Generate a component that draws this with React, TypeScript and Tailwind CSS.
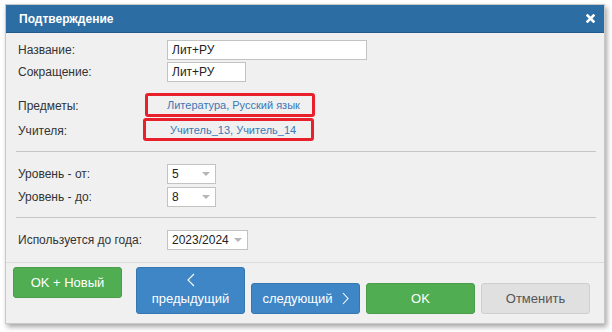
import React from 'react';

const font = { fontFamily: '"Liberation Sans", Arial, sans-serif' };

function Caret() {
  return <span className="ml-auto mr-[5px] h-0 w-0 border-x-[4px] border-t-[4px] border-x-transparent border-t-[#b5b5b5]" />;
}

function Select({ value, width }: { value: string; width: string }) {
  return (
    <div className={`flex h-[20px] ${width} items-center border border-[#c3c3c3] bg-white pl-[4px] text-[12px] text-[#222]`}>
      <span>{value}</span>
      <Caret />
    </div>
  );
}

function Row({ label, children, className = '' }: { label: string; children: React.ReactNode; className?: string }) {
  return (
    <div className={`flex items-center ${className}`}>
      <div className="w-[149px] text-[12px] text-[#333]">{label}</div>
      {children}
    </div>
  );
}

export default function App() {
  return (
    <div className="h-[332px] w-[612px] bg-white pt-[4px] pl-[5px]" style={font}>
      <div className="flex h-[320px] w-[600px] flex-col border border-[#c9c9c9] bg-[#f0f0f0] shadow-[2px_3px_5px_rgba(0,0,0,0.35)]">
        {/* header */}
        <div className="flex h-[28px] items-center border-b border-[#215a88] bg-[#2c6ea3] pl-[13px] pr-[9px]">
          <span className="text-[12px] font-bold text-white">Подтверждение</span>
          <svg className="ml-auto" width="9" height="9" viewBox="0 0 9 9">
            <path d="M1.5 1.5 L7.5 7.5 M7.5 1.5 L1.5 7.5" stroke="white" strokeWidth="2.6" strokeLinecap="square" />
          </svg>
        </div>

        {/* body */}
        <div className="flex flex-col pt-[7px] pl-[12px] pr-[8px] pb-[12px]">
          <Row label="Название:" className="h-[20px]">
            <div className="flex h-[20px] w-[200px] items-center border border-[#c3c3c3] bg-white pl-[4px] text-[12px] text-[#222]">Лит+РУ</div>
          </Row>
          <Row label="Сокращение:" className="mt-[2px] h-[20px]">
            <div className="flex h-[20px] w-[79px] items-center border border-[#c3c3c3] bg-white pl-[4px] text-[12px] text-[#222]">Лит+РУ</div>
          </Row>

          <Row label="Предметы:" className="mt-[12px] h-[23px]">
            <div className="relative flex h-[23px] items-center text-[11px] text-[#3a78b6]">
              <span className="absolute -left-[22px] -top-[1px] h-[24px] w-[170px] rounded-[3px] border-[3px] border-[#e8202b]" />
              Литература, Русский язык
            </div>
          </Row>
          <Row label="Учителя:" className="mt-[2px] h-[23px]">
            <div className="relative flex h-[23px] items-center pl-[3px] text-[11px] text-[#3a78b6]">
              <span className="absolute -left-[24px] -top-[1px] h-[23px] w-[171px] rounded-[3px] border-[3px] border-[#e8202b]" />
              Учитель_13, Учитель_14
            </div>
          </Row>

          <div className="mt-[9px] ml-[-2px] h-px bg-[#c6c6c6]" />

          <Row label="Уровень - от:" className="mt-[12px] h-[20px]">
            <Select value="5" width="w-[49px]" />
          </Row>
          <Row label="Уровень - до:" className="mt-[3px] h-[20px]">
            <Select value="8" width="w-[49px]" />
          </Row>

          <div className="mt-[10px] ml-[-2px] h-px bg-[#c6c6c6]" />

          <Row label="Используется до года:" className="mt-[12px] h-[20px]">
            <Select value="2023/2024" width="w-[81px]" />
          </Row>
        </div>

        {/* footer */}
        <div className="flex items-end border-t border-[#dcdcdc] pt-[4px] pl-[7px] text-[13px]">
          <button className="flex h-[31px] w-[109px] items-center justify-center self-start rounded-[3px] border border-[#4a9e4a] bg-[#50ad52] text-white">
            OK + Новый
          </button>
          <button className="ml-[14px] flex h-[47px] w-[109px] flex-col items-center justify-center rounded-[3px] border border-[#3677b0] bg-[#3e86c6] text-white">
            <svg width="8" height="14" viewBox="0 0 8 14">
              <path d="M7 1 L1 7 L7 13" stroke="white" strokeWidth="1.1" fill="none" />
            </svg>
            <span className="mt-[2px]">предыдущий</span>
          </button>
          <button className="ml-[6px] flex h-[31px] w-[109px] items-center justify-center gap-[9px] rounded-[3px] border border-[#3677b0] bg-[#3e86c6] text-white">
            <span>следующий</span>
            <svg width="7" height="13" viewBox="0 0 7 13">
              <path d="M1 1 L6 6.5 L1 12" stroke="white" strokeWidth="1.1" fill="none" />
            </svg>
          </button>
          <button className="ml-[6px] flex h-[31px] w-[109px] items-center justify-center rounded-[3px] border border-[#4a9e4a] bg-[#50ad52] text-white">
            OK
          </button>
          <button className="ml-[6px] flex h-[31px] w-[109px] items-center justify-center rounded-[3px] border border-[#cfcfcf] bg-[#e0e0e0] text-[#555]">
            Отменить
          </button>
        </div>
      </div>
    </div>
  );
}
